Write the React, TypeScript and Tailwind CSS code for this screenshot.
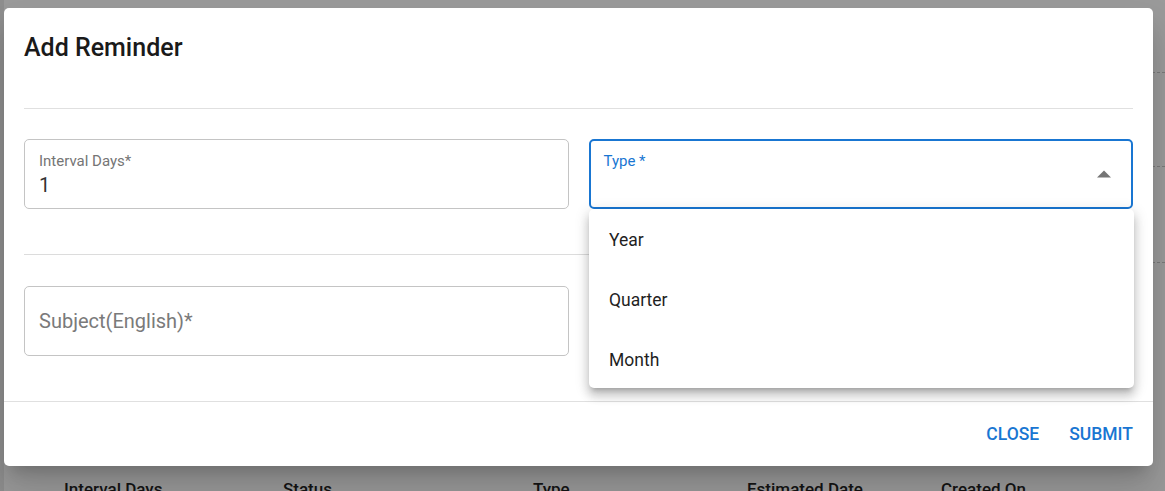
import React from "react";

const columns = [
    { label: "Interval Days", width: "w-[219px]" },
    { label: "Status", width: "w-[250px]" },
    { label: "Type", width: "w-[214px]" },
    { label: "Estimated Date", width: "w-[194px]" },
    { label: "Created On", width: "w-[180px]" },
];

const options = ["Year", "Quarter", "Month"];

function PageBehind() {
    return (
        <div className="flex h-full">
            <div className="w-[4px] shrink-0 bg-[#8e8e8e]" />
            <div className="flex flex-1 flex-col">
                <div className="h-[73px] shrink-0 border-b border-dashed border-[#7a7a7a]" />
                <div className="h-[94px] shrink-0 border-b border-dashed border-[#7a7a7a]" />
                <div className="h-[96px] shrink-0 border-b border-dashed border-[#7a7a7a]" />
                <div className="flex shrink-0 pl-[60px] pt-[215px] text-[17px] font-medium leading-[22px] text-[#141414]">
                    {columns.map((c) => (
                        <div key={c.label} className={c.width}>
                            {c.label}
                        </div>
                    ))}
                </div>
            </div>
        </div>
    );
}

export default function App() {
    return (
        <div className="relative h-[491px] w-[1165px] overflow-hidden bg-[#9a9a9a] font-['Roboto','Liberation_Sans',sans-serif]">
            <PageBehind />

            <div className="absolute left-[4px] top-[8px] flex h-[458px] w-[1149px] flex-col rounded-[5px] bg-white shadow-[0_11px_15px_-7px_rgba(0,0,0,0.2),0_24px_38px_3px_rgba(0,0,0,0.14)]">
                <h2 className="pl-[20px] pt-[24px] text-[25px] font-medium leading-[32px] text-[#1a1a1a]">
                    Add Reminder
                </h2>
                <div className="mx-[20px] mt-[44px] h-px bg-[#e0e0e0]" />

                <div className="mx-[20px] mt-[30px] grid grid-cols-2 gap-[20px]">
                    <div className="h-[70px] rounded-[5px] border border-[#c4c4c4] px-[14px] pt-[12px]">
                        <div className="text-[15px] leading-[18px] text-[#757575]">Interval Days*</div>
                        <div className="mt-[3px] text-[20px] leading-[24px] text-[#333]">1</div>
                    </div>
                    <div className="flex h-[70px] items-start justify-between rounded-[5px] border-2 border-[#1976d2] pl-[13px] pr-[20px] pt-[11px]">
                        <div className="text-[15px] leading-[18px] text-[#1976d2]">Type *</div>
                        <svg width="14" height="8" viewBox="0 0 14 8" className="mt-[18px]">
                            <path d="M0 7.5 L7 0.5 L14 7.5 Z" fill="#757575" />
                        </svg>
                    </div>
                </div>

                <div className="mx-[20px] mt-[45px] h-px bg-[#dcdcdc]" />

                <div className="mx-[20px] mt-[31px] grid grid-cols-2 gap-[20px]">
                    <div className="flex h-[70px] items-center rounded-[5px] border border-[#c4c4c4] px-[14px]">
                        <span className="text-[20px] leading-[24px] text-[#7a7a7a]">Subject(English)*</span>
                    </div>
                    <div />
                </div>

                <div className="mt-[45px] h-px bg-[#e0e0e0]" />

                <div className="flex flex-1 items-center justify-end gap-[30px] pr-[20px]">
                    <button className="text-[17.5px] font-medium uppercase leading-[22px] text-[#1976d2]">Close</button>
                    <button className="text-[17.5px] font-medium uppercase leading-[22px] text-[#1976d2]">Submit</button>
                </div>

                <ul className="absolute left-[585px] top-[201px] h-[179px] w-[545px] overflow-hidden rounded-[5px] bg-white pt-[1px] shadow-[0_5px_5px_-3px_rgba(0,0,0,0.2),0_8px_10px_1px_rgba(0,0,0,0.14),0_3px_14px_2px_rgba(0,0,0,0.12)]">
                    {options.map((o) => (
                        <li key={o} className="flex h-[60px] items-center px-[20px] text-[17.5px] text-[#1f1f1f]">
                            {o}
                        </li>
                    ))}
                </ul>
            </div>
        </div>
    );
}
